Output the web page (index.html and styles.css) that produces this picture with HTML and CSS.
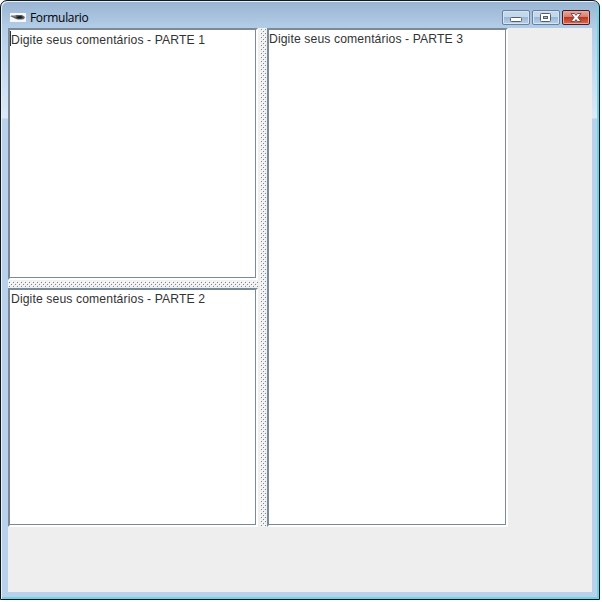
FILE: index.html
```html
<!DOCTYPE html>
<html lang="pt">
<head>
<meta charset="utf-8">
<title>Formulario</title>
<link rel="stylesheet" href="styles.css">
</head>
<body>
<div class="window">
  <header class="titlebar">
    <svg class="app-icon" width="16" height="9" viewBox="0 0 16 9"><rect width="16" height="9" fill="#f5f8fa"/><path d="M0 3 L3 3 L6 2 L12 2 L15 4 L14 6 L10 7 L6 6 L4 5Z" fill="#5b6164"/><path d="M6 4 L10 3 L13 4 L11 5.5 L8 5.5Z" fill="#17191b"/><path d="M1 2.5 L6 3 M7 6.5h5" stroke="#a5adb2" fill="none"/></svg>
    <h1 class="title">Formulario</h1>
    <div class="controls">
      <button class="control" aria-label="Minimizar"><svg width="26" height="13" viewBox="0 0 26 13"><rect x="7.5" y="6.5" width="11" height="4" rx="1" fill="#fff" stroke="#535d6d"/></svg></button>
      <button class="control" aria-label="Maximizar"><svg width="26" height="13" viewBox="0 0 26 13"><rect x="7.5" y="2.5" width="10" height="8" rx="1" fill="#fff" stroke="#535d6d"/><rect x="10.5" y="5.5" width="4" height="2" fill="#a8c2dc" stroke="#535d6d"/></svg></button>
      <button class="control close" aria-label="Fechar"><svg width="26" height="13" viewBox="0 0 26 13"><path d="M8 2.5h3.4L13 4.4l1.6-1.9H18L15 6.5l3 4h-3.4L13 8.6l-1.6 1.9H8l3-4z" fill="#fff" stroke="#66404a" stroke-width=".9"/></svg></button>
    </div>
  </header>
  <main class="content">
    <div class="split">
      <div class="left">
        <section class="pane focused">Digite seus comentários - PARTE 1</section>
        <div class="divider horizontal"></div>
        <section class="pane">Digite seus comentários - PARTE 2</section>
      </div>
      <div class="divider vertical"></div>
      <section class="pane third">Digite seus comentários - PARTE 3</section>
    </div>
  </main>
</div>
</body>
</html>
```
FILE: styles.css
```css
* { box-sizing: border-box; }
body { margin: 0; background: #fff; overflow: hidden; }
.window {
  width: 600px;
  height: 600px;
  padding: 0 7px 7px;
  border: 1px solid #10181c;
  border-radius: 7px 7px 0 0;
  background:
    linear-gradient(90deg, transparent 596px, #6fd3e3 596px),
    linear-gradient(transparent 596px, #6fd3e3 596px),
    linear-gradient(#98b4d2 0, #b5cee8 28px, #c2d9f0 60px, #dce9f7 117px, #b9d1ea 118px, #b9d1ea 100%);
  box-shadow: inset 1px 1px 0 #e4f2fb;
}
.titlebar {
  display: flex;
  align-items: flex-start;
  height: 27px;
}
.app-icon { margin: 12px 0 0 2px; }
.title {
  margin: 9px 0 0 4px;
  font: 12px/16px "Open Sans", "Noto Sans", sans-serif;
  letter-spacing: -0.33px;
  color: #000;
}
.controls { display: flex; gap: 2px; margin: 9px 2px 0 auto; }
.control {
  display: block;
  width: 28px;
  height: 15px;
  padding: 0;
  border: 1px solid #68809b;
  border-radius: 2px;
  background: linear-gradient(#c4d8ec 0 48%, #9bb7d5 50%, #bad3eb);
  box-shadow: inset 0 0 0 1px #d5e5f3;
}
.control svg { display: block; }
.close {
  border-color: #471c28;
  background: linear-gradient(#e7a99c 0, #d87a68 48%, #bd3721 50%, #d76d50);
  box-shadow: inset 0 0 0 1px #e9a99b;
}
.content { height: 564px; background: #eee; }
.split { display: grid; grid-template-columns: 250px 9px 241px; height: 499px; }
.left { display: grid; grid-template-rows: 252px 8px 239px; }
.pane {
  position: relative;
  padding: 1px 1px;
  border: 2px solid;
  border-color: #7a8a99 #fff #fff #7a8a99;
  background: #fff;
  box-shadow: inset -1px -1px 0 #7a8a99;
  color: #333;
  font: 12.2px/16px "Liberation Sans", Arial, sans-serif;
  letter-spacing: 0.11px;
  white-space: nowrap;
}
.third { padding-left: 0; }
.focused { padding-top: 2px; }
.focused::before {
  content: "";
  position: absolute;
  left: 0;
  top: 1px;
  width: 1px;
  height: 15px;
  background: #333;
}
.divider {
  background-color: #f0f0f0;
  background-image:
    conic-gradient(at 1px 1px, transparent 270deg, #7a8a99 0),
    conic-gradient(at 1px 1px, transparent 270deg, #7a8a99 0),
    conic-gradient(at 1px 1px, transparent 270deg, #fff 0),
    conic-gradient(at 1px 1px, transparent 270deg, #fff 0);
  background-size: 4px 4px;
  background-position: 1px 1px, 3px 3px, 2px 2px, 4px 4px;
}
.vertical { border: solid #f0f0f0; border-width: 0 1px 0 2px; }
.horizontal { border: solid #f0f0f0; border-width: 1px 0; }
```
